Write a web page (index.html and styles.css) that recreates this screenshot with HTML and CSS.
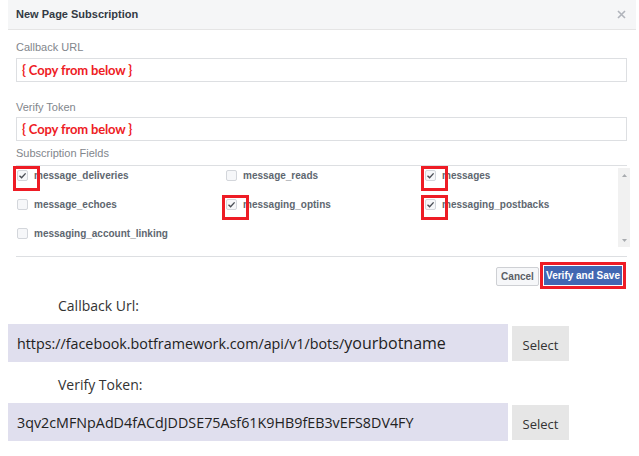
FILE: index.html
```html
<!DOCTYPE html>
<html>
<head>
<meta charset="utf-8">
<link rel="stylesheet" href="styles.css">
</head>
<body>
<div class="dialog">
  <div class="hd">
    <span class="title">New Page Subscription</span>
    <svg class="close" width="9" height="9" viewBox="0 0 9 9"><path d="M1 1L8 8M8 1L1 8" stroke="#b0b4bb" stroke-width="1.6"/></svg>
  </div>
  <div class="bd">
    <div class="label first">Callback URL</div>
    <div class="input"><span class="note">{ Copy from below }</span></div>
    <div class="label second">Verify Token</div>
    <div class="input short"><span class="note">{ Copy from below }</span></div>
    <div class="label third">Subscription Fields</div>
    <div class="fields">
      <div class="grid">
        <div class="field"><span class="cb checked mark"><svg width="9" height="9" viewBox="0 0 9 9"><path d="M1.5 4.8L3.6 6.8L7.6 2.4" fill="none" stroke="#4b4f56" stroke-width="1.4"/></svg></span><span class="fl">message_deliveries</span></div>
        <div class="field"><span class="cb"></span><span class="fl">message_reads</span></div>
        <div class="field"><span class="cb checked mark"><svg width="9" height="9" viewBox="0 0 9 9"><path d="M1.5 4.8L3.6 6.8L7.6 2.4" fill="none" stroke="#4b4f56" stroke-width="1.4"/></svg></span><span class="fl">messages</span></div>
        <div class="field"><span class="cb"></span><span class="fl">message_echoes</span></div>
        <div class="field"><span class="cb checked mark"><svg width="9" height="9" viewBox="0 0 9 9"><path d="M1.5 4.8L3.6 6.8L7.6 2.4" fill="none" stroke="#4b4f56" stroke-width="1.4"/></svg></span><span class="fl">messaging_optins</span></div>
        <div class="field"><span class="cb checked mark"><svg width="9" height="9" viewBox="0 0 9 9"><path d="M1.5 4.8L3.6 6.8L7.6 2.4" fill="none" stroke="#4b4f56" stroke-width="1.4"/></svg></span><span class="fl">messaging_postbacks</span></div>
        <div class="field"><span class="cb"></span><span class="fl">messaging_account_linking</span></div>
      </div>
      <div class="scrollbar">
        <svg width="5" height="3" viewBox="0 0 5 3"><path d="M0 3L2.5 0L5 3Z" fill="#a8abaf"/></svg>
        <svg width="5" height="3" viewBox="0 0 5 3"><path d="M0 0L2.5 3L5 0Z" fill="#a8abaf"/></svg>
      </div>
    </div>
  </div>
  <div class="ft">
    <button class="btn cancel">Cancel</button>
    <button class="btn save">Verify and Save</button>
  </div>
</div>

<div class="info">
  <div class="ilabel">Callback Url:</div>
  <div class="row">
    <div class="value">https://facebook.botframework.com/api/v1/bots/<span class="bot">yourbotname</span></div>
    <div class="select">Select</div>
  </div>
  <div class="ilabel second-l">Verify Token:</div>
  <div class="row">
    <div class="value token">3qv2cMFNpAdD4fACdJDDSE75Asf61K9HB9fEB3vEFS8DV4FY</div>
    <div class="select">Select</div>
  </div>
</div>
</body>
</html>
```

FILE: styles.css
```css
* { box-sizing: border-box; }
body {
  margin: 0;
  background: #fff;
  font-family: "Liberation Sans", Arial, sans-serif;
  width: 639px;
  height: 456px;
  overflow: hidden;
}
.dialog {
  width: 628px;
  margin-left: 8px;
}
.hd {
  height: 30px;
  background: #f5f6f7;
  border-bottom: 1px solid #e5e5e5;
  display: flex;
  align-items: center;
  justify-content: space-between;
  padding: 0 10px 1px 8px;
}
.title {
  font-size: 11px;
  font-weight: bold;
  color: #333a44;
}
.bd {
  padding: 0 9px 0 8px;
}
.label {
  font-size: 11px;
  line-height: 14px;
  color: #82868c;
}
.label.first { margin-top: 10px; }
.label.second { margin-top: 18px; }
.label.third { margin-top: 5px; }
.input {
  margin-top: 4px;
  height: 24px;
  border: 1px solid #dddfe2;
  display: flex;
  align-items: center;
  padding-left: 5px;
}
.input.short { margin-top: 3px; }
.note {
  font-family: Lato, "Open Sans", sans-serif;
  font-weight: bold;
  font-size: 13px;
  letter-spacing: -0.15px;
  color: #ee1c25;
}
.fields {
  margin-top: 5px;
  border-top: 1px solid #dddfe2;
  display: flex;
  padding-bottom: 9px;
}
.grid {
  flex: 1;
  display: grid;
  grid-template-columns: 209px 199px 1fr;
  grid-auto-rows: 18px;
  row-gap: 11px;
  padding-left: 1px;
}
.field {
  display: flex;
  align-items: center;
}
.cb {
  position: relative;
  width: 11px;
  height: 11px;
  border: 1px solid #d3d6db;
  border-radius: 2px;
  background: #f6f7f9;
  display: flex;
  align-items: center;
  justify-content: center;
  margin-right: 6px;
  flex: none;
}
.cb.mark::after {
  content: "";
  position: absolute;
  left: -5px;
  top: -5px;
  width: 21px;
  height: 19px;
  border: 3px solid #ee1c25;
}
.fl {
  font-size: 10px;
  font-weight: bold;
  color: #606770;
}
.scrollbar {
  width: 12px;
  height: 79px;
  margin-top: 2px;
  margin-right: -3px;
  background: #f1f1f1;
  display: flex;
  flex-direction: column;
  justify-content: space-between;
  align-items: center;
  padding: 6px 0 5px;
}
.ft {
  border-top: 1px solid #dddfe2;
  margin: 0 9px 0 8px;
  height: 33px;
  display: flex;
  justify-content: flex-end;
  align-items: flex-start;
  padding-top: 9px;
  padding-right: 5px;
  gap: 5px;
}
.btn {
  font-family: "Liberation Sans", Arial, sans-serif;
  font-size: 10px;
  font-weight: bold;
  height: 19px;
  padding: 0;
  border-radius: 2px;
}
.cancel {
  width: 43px;
  margin-top: 1px;
  background: #f6f7f9;
  border: 1px solid #ced0d4;
  color: #5b5f66;
}
.save {
  width: 78px;
  background: #4267b2;
  border: 1px solid #4267b2;
  border-radius: 0;
  color: #fff;
  outline: 3px solid #ee1c25;
  outline-offset: 1px;
}
.info {
  padding: 7px 0 0 8px;
  font-family: "Open Sans", "Noto Sans", sans-serif;
  color: #222;
}
.ilabel {
  font-size: 14px;
  line-height: 19px;
  padding-left: 50px;
  color: #333;
}
.ilabel.second-l { margin-top: 13px; }
.row {
  display: flex;
  align-items: center;
  gap: 4px;
  margin-top: 9px;
}
.value {
  width: 500px;
  height: 38px;
  background: #e0dfee;
  display: flex;
  align-items: center;
  padding-left: 9px;
  font-size: 14.3px;
  white-space: nowrap;
  overflow: hidden;
}
.value.token { font-size: 14.3px; }
.bot { font-size: 16px; }
.select {
  width: 57px;
  height: 35px;
  background: #e6e6e6;
  font-size: 13px;
  display: flex;
  align-items: center;
  justify-content: center;
  padding-top: 4px;
  color: #333;
}
```
